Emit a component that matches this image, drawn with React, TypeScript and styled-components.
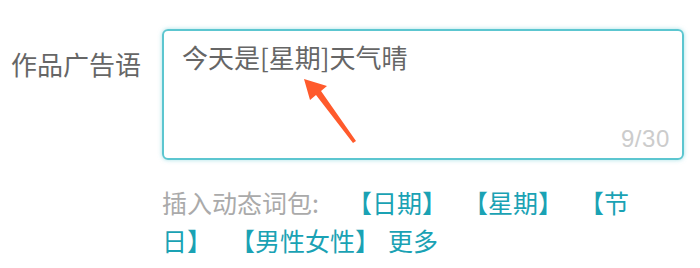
import styled, { createGlobalStyle } from 'styled-components';

const GlobalStyle = createGlobalStyle`
  body {
    margin: 0;
    background: #fff;
    font-family: 'Noto Sans CJK SC', 'Noto Sans', sans-serif;
  }
`;

const Page = styled.div`
  position: relative;
  width: 700px;
  height: 268px;
  padding-top: 29px;
  box-sizing: border-box;
  overflow: hidden;
`;

const FormRow = styled.div`
  display: flex;
  align-items: flex-start;
`;

const Label = styled.div`
  width: 162px;
  padding-right: 21px;
  box-sizing: border-box;
  margin-top: 15px;
  text-align: right;
  font-size: 26px;
  line-height: 40px;
  color: #666;
  white-space: nowrap;
`;

const Field = styled.div`
  display: flex;
  flex-direction: column;
`;

const TextBox = styled.div`
  position: relative;
  width: 522px;
  height: 131px;
  box-sizing: border-box;
  border: 2px solid #5cc6d0;
  border-radius: 6px;
  box-shadow: 0 0 4px rgba(92, 198, 208, 0.55);
  padding: 6px 18px;
  font-size: 26px;
  line-height: 40px;
  color: #666;
`;

const Counter = styled.span`
  position: absolute;
  right: 12px;
  bottom: 7px;
  font-family: 'Liberation Sans', sans-serif;
  font-size: 24px;
  letter-spacing: 0.6px;
  line-height: 24px;
  color: #ccc;
`;

const Help = styled.div`
  width: 485px;
  margin-top: 23px;
  font-size: 25px;
  line-height: 38px;
  color: #aaa;
  text-spacing-trim: space-all;
`;

const Tag = styled.span<{ $gap?: number }>`
  color: #1aa2b4;
  margin-left: ${(p) => p.$gap ?? 16}px;
`;

const Arrow = styled.svg`
  position: absolute;
  left: 296px;
  top: 74px;
`;

export default function App() {
  return (
    <Page>
      <GlobalStyle />
      <FormRow>
        <Label>作品广告语</Label>
        <Field>
          <TextBox>
            今天是[星期]天气晴
            <Counter>9/30</Counter>
          </TextBox>
          <Help>
            插入动态词包:
            <Tag $gap={28}>【日期】</Tag>
            <Tag>【星期】</Tag>
            <Tag>【节日】</Tag>
            <Tag $gap={18}>【男性女性】</Tag>
            <Tag $gap={8}>更多</Tag>
          </Help>
        </Field>
      </FormRow>
      <Arrow width="70" height="76" viewBox="0 0 70 76">
        <path d="M8 5 L31 12 L25 17 L60 67 L57 69 L20 21 L14 26 Z" fill="#ff5a2c" />
      </Arrow>
    </Page>
  );
}
